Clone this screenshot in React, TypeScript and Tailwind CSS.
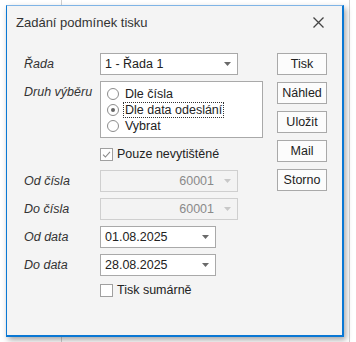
import { ReactNode } from "react";

const font = { fontFamily: '"Liberation Sans", Arial, sans-serif' };

function Caret({ light }: { light?: boolean }) {
  return (
    <svg width="7" height="4" viewBox="0 0 7 4" className="shrink-0">
      <path d="M0 0h7L3.5 4z" fill={light ? "#c8c8c8" : "#6a6a6a"} />
    </svg>
  );
}

function Label({ children, className = "" }: { children: ReactNode; className?: string }) {
  return <div className={`w-[76px] shrink-0 italic text-[#333] ${className}`}>{children}</div>;
}

function Select({ value, width, disabled }: { value: string; width: string; disabled?: boolean }) {
  return (
    <div
      className={`flex h-[22px] items-center border pl-[4px] pr-[6px] ${width} ${
        disabled ? "border-[#cfcfcf] bg-[#f3f3f3] text-[#8a8a8a]" : "border-[#a9a9a9] bg-white text-[#222]"
      }`}
    >
      <span className={`flex-1 ${disabled ? "pr-[10px] text-right" : ""}`}>{value}</span>
      <Caret light={disabled} />
    </div>
  );
}

function Radio({ label, checked, focused }: { label: string; checked?: boolean; focused?: boolean }) {
  return (
    <div className="flex h-[16px] items-center">
      <div className="flex h-[12px] w-[12px] items-center justify-center rounded-full border border-[#8c8c8c] bg-white">
        {checked ? <div className="h-[4px] w-[4px] rounded-full bg-[#666]" /> : null}
      </div>
      <span
        className={`ml-[4px] px-[1px] leading-[14px] ${focused ? "border border-dotted border-[#333]" : "border border-transparent"}`}
      >
        {label}
      </span>
    </div>
  );
}

function Checkbox({ label, checked }: { label: string; checked?: boolean }) {
  return (
    <div className="flex h-[13px] items-center">
      <div className="flex h-[13px] w-[13px] items-center justify-center border border-[#a0a0a0] bg-white">
        {checked ? (
          <svg width="9" height="9" viewBox="0 0 9 9">
            <path d="M1 4.6l2.4 2.4L8 1.8" fill="none" stroke="#8a8a8a" strokeWidth="1.1" />
          </svg>
        ) : null}
      </div>
      <span className="ml-[4px] text-[#222]">{label}</span>
    </div>
  );
}

function Btn({ children }: { children: ReactNode }) {
  return (
    <div className="flex h-[22px] w-[50px] items-center justify-center border border-[#a9a9a9] bg-[#fcfcfc] text-[#222]">
      {children}
    </div>
  );
}

export default function App() {
  return (
    <div className="relative h-[342px] w-[356px] overflow-hidden bg-white text-[12.5px]" style={font}>
      {/* background app behind dialog */}
      <div className="flex h-full">
        <div className="w-[62px] border-r border-[#cfcfcf]" />
        <div className="flex-1" />
        <div className="w-[7px] border-l border-[#d4d4d4]" />
      </div>

      <div className="absolute left-[6px] top-[5px] h-[332px] w-[338px] border border-r-2 border-b-2 border-[#0a78d4] border-t-[#7fb4e6] bg-[#f4f4f4] shadow-[2px_3px_6px_rgba(0,0,0,0.35)]">
        <div className="flex h-[32px] items-center justify-between pl-[9px] pr-[18px] pt-[1px]">
          <span className="text-[13px] text-[#333]">Zadání podmínek tisku</span>
          <svg width="11" height="11" viewBox="0 0 11 11">
            <path d="M0.5 0.5l10 10M10.5 0.5l-10 10" stroke="#444" strokeWidth="1.3" />
          </svg>
        </div>

        <div className="flex pl-[17px] pt-[15px]">
          <div className="flex w-[253px] flex-col">
            <div className="flex items-center">
              <Label>Řada</Label>
              <Select value="1 - Řada 1" width="w-[138px]" />
            </div>

            <div className="mt-[6px] flex">
              <Label className="pt-[2px]">Druh výběru</Label>
              <div className="flex h-[57px] w-[163px] flex-col justify-center border border-[#a9a9a9] bg-white pl-[6px] text-[#222]">
                <Radio label="Dle čísla" />
                <Radio label="Dle data odeslání" checked focused />
                <Radio label="Vybrat" />
              </div>
            </div>

            <div className="ml-[76px] mt-[10px]">
              <Checkbox label="Pouze nevytištěné" checked />
            </div>

            <div className="mt-[9px] flex items-center">
              <Label>Od čísla</Label>
              <Select value="60001" width="w-[138px]" disabled />
            </div>
            <div className="mt-[6px] flex items-center">
              <Label>Do čísla</Label>
              <Select value="60001" width="w-[138px]" disabled />
            </div>
            <div className="mt-[6px] flex items-center">
              <Label>Od data</Label>
              <Select value="01.08.2025" width="w-[116px]" />
            </div>
            <div className="mt-[6px] flex items-center">
              <Label>Do data</Label>
              <Select value="28.08.2025" width="w-[116px]" />
            </div>

            <div className="ml-[76px] mt-[8px]">
              <Checkbox label="Tisk sumárně" />
            </div>
          </div>

          <div className="flex flex-col gap-[7px]">
            <Btn>Tisk</Btn>
            <Btn>Náhled</Btn>
            <Btn>Uložit</Btn>
            <Btn>Mail</Btn>
            <Btn>Storno</Btn>
          </div>
        </div>
      </div>
    </div>
  );
}
